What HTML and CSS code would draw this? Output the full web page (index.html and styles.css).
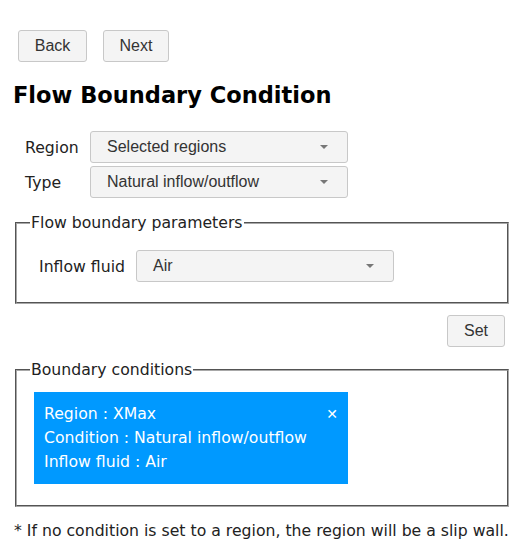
FILE: index.html
```html
<!DOCTYPE html>
<html>
<head>
<meta charset="utf-8">
<link rel="stylesheet" href="styles.css">
</head>
<body>
<div class="page">
  <div class="toolbar">
    <button class="btn btn-back">Back</button>
    <button class="btn btn-next">Next</button>
  </div>
  <h1 class="title">Flow Boundary Condition</h1>
  <div class="form">
    <div class="row">
      <span class="label">Region</span>
      <div class="select"><span>Selected regions</span><span class="caret"></span></div>
    </div>
    <div class="row">
      <span class="label">Type</span>
      <div class="select"><span>Natural inflow/outflow</span><span class="caret"></span></div>
    </div>
  </div>
  <fieldset class="group">
    <legend>Flow boundary parameters</legend>
    <div class="row inner-row">
      <span class="label">Inflow fluid</span>
      <div class="select"><span>Air</span><span class="caret"></span></div>
    </div>
  </fieldset>
  <div class="actions">
    <button class="btn btn-set">Set</button>
  </div>
  <fieldset class="group group-list">
    <legend>Boundary conditions</legend>
    <div class="card">
      <div class="card-lines">
        <div>Region : XMax</div>
        <div>Condition : Natural inflow/outflow</div>
        <div>Inflow fluid : Air</div>
      </div>
      <span class="close">&#x2715;</span>
    </div>
  </fieldset>
  <p class="note">* If no condition is set to a region, the region will be a slip wall.</p>
</div>
</body>
</html>
```

FILE: styles.css
```css
html, body {
  margin: 0;
  padding: 0;
  background: #fff;
}
body {
  font-family: "DejaVu Sans", sans-serif;
  font-size: 15.7px;
  color: #222;
}
.page {
  padding: 30px 15px 0 13px;
}
.toolbar {
  display: flex;
  gap: 16px;
  padding-left: 5px;
}
.btn {
  font-family: "Liberation Sans", Arial, sans-serif;
  font-size: 16px;
  color: #333;
  background: #f4f4f4;
  border: 1px solid #c8c8c8;
  border-radius: 3px;
  height: 32px;
  padding: 0;
}
.btn-back { width: 69px; }
.btn-next { width: 66px; }
.btn-set { width: 58px; }
.title {
  font-family: "DejaVu Sans", sans-serif;
  font-weight: bold;
  font-size: 22.5px;
  color: #000;
  margin: 17px 0 0 0;
  height: 52px;
  line-height: 32px;
}
.form {
  display: flex;
  flex-direction: column;
  gap: 3px;
  padding-left: 12px;
}
.row {
  display: flex;
  align-items: center;
}
.form .label {
  width: 65px;
}
.select {
  box-sizing: border-box;
  width: 258px;
  height: 32px;
  background: #f4f4f4;
  border: 1px solid #c8c8c8;
  border-radius: 3px;
  display: flex;
  align-items: center;
  justify-content: space-between;
  padding: 0 19px 0 16px;
  font-family: "Liberation Sans", Arial, sans-serif;
  font-size: 16px;
  color: #333;
}
.caret {
  width: 0;
  height: 0;
  border-left: 4px solid transparent;
  border-right: 4px solid transparent;
  border-top: 4px solid #777;
}
.group {
  margin: 15px 0 0 2px;
  padding: 0;
  border: 2px groove #a8a8a8;
  width: 494px;
  box-sizing: border-box;
}
.group legend {
  padding: 0 1px;
  margin-left: 13px;
  color: #222;
}
.inner-row {
  padding: 18px 0 20px 22px;
}
.inner-row .label {
  width: 97px;
}
.actions {
  display: flex;
  justify-content: flex-end;
  padding: 11px 3px 0 0;
}
.group-list {
  margin-top: 13px;
  padding: 13px 0 21px 0;
}
.card {
  width: 314px;
  margin-left: 17px;
  box-sizing: border-box;
  background: #0099ff;
  color: #fff;
  display: flex;
  justify-content: space-between;
  padding: 10px 10px 10px 10px;
  line-height: 24px;
}
.close {
  font-size: 14px;
  font-weight: bold;
}
.note {
  margin: 14px 0 0 1px;
  color: #222;
  white-space: nowrap;
}
```
